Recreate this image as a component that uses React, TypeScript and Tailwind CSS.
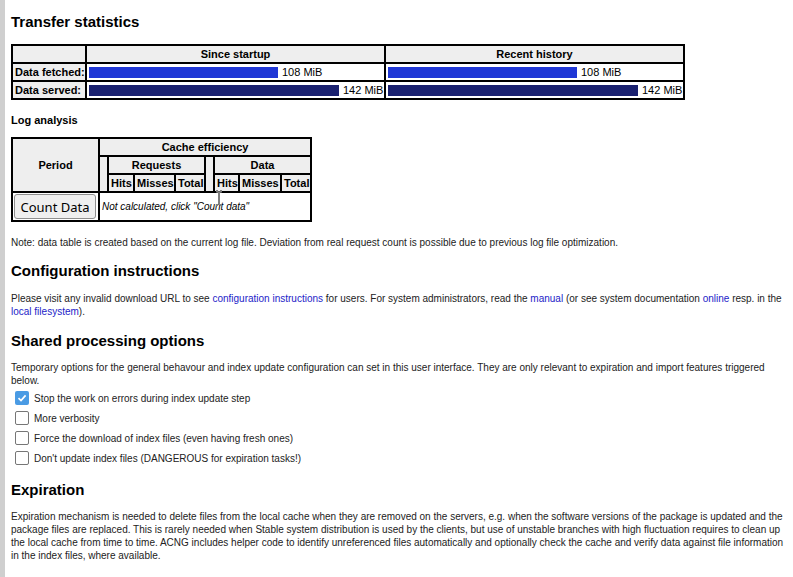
import React from 'react';

const cell = 'border border-black p-0';
const head = 'border border-black bg-[#eeeeee] px-[2px] py-0 font-bold text-center whitespace-nowrap';

const Bar: React.FC<{ width: number; color: string; label: string }> = ({ width, color, label }) => (
  <div className="flex items-center gap-[4px] pl-[2px]">
    <div className={`h-[11px] ${color}`} style={{ width }} />
    <span>{label}</span>
  </div>
);

const Check: React.FC<{ checked?: boolean; label: string }> = ({ checked, label }) => (
  <label className="flex items-center gap-[5px] h-[20px] pl-[4px]">
    {checked ? (
      <span className="w-[14px] h-[14px] rounded-[2px] bg-[#4a9be4] flex items-center justify-center">
        <svg width="10" height="10" viewBox="0 0 10 10">
          <path d="M1.5 5.2 L4 7.6 L8.6 2.4" fill="none" stroke="white" strokeWidth="1.7" />
        </svg>
      </span>
    ) : (
      <span className="w-[14px] h-[14px] rounded-[2px] border border-[#767676] bg-white" />
    )}
    <span>{label}</span>
  </label>
);

const A: React.FC<{ children: React.ReactNode }> = ({ children }) => (
  <a href="#" className="text-[#2323c8]">{children}</a>
);

export default function App() {
  return (
    <div className="min-h-[577px] border-l-[5px] border-[#cfcfcf] bg-white pl-[6px] pr-[7px] text-[10px] leading-[13px] text-[#222] font-['Liberation_Sans',Arial,sans-serif]">
      <h2 className="pt-[13px] text-[15px] leading-[18px] font-bold text-black">Transfer statistics</h2>

      <table className="mt-[13px] border-separate border-spacing-0 border border-black text-[11px] leading-[16px] text-black table-fixed w-[672px]">
        <colgroup>
          <col className="w-[74px]" />
          <col className="w-[299px]" />
          <col className="w-[299px]" />
        </colgroup>
        <tbody>
          <tr>
            <td className={`${head}`}></td>
            <td className={head}>Since startup</td>
            <td className={head}>Recent history</td>
          </tr>
          <tr>
            <td className={`${head} text-left px-[1px]`}>Data fetched:</td>
            <td className={cell}><Bar width={189} color="bg-[#2038d6]" label="108 MiB" /></td>
            <td className={cell}><Bar width={189} color="bg-[#2038d6]" label="108 MiB" /></td>
          </tr>
          <tr>
            <td className={`${head} text-left px-[1px]`}>Data served:</td>
            <td className={cell}><Bar width={250} color="bg-[#1a2170]" label="142 MiB" /></td>
            <td className={cell}><Bar width={250} color="bg-[#1a2170]" label="142 MiB" /></td>
          </tr>
        </tbody>
      </table>

      <h3 className="mt-[13px] text-[11px] leading-[14px] font-bold text-black">Log analysis</h3>

      <div className="relative w-fit">
        <table className="mt-[10px] border-separate border-spacing-0 border border-black text-[11px] leading-[16px] text-black table-fixed w-[299px]">
          <colgroup>
            <col className="w-[87px]" />
            <col className="w-[9px]" />
            <col className="w-[26px]" />
            <col className="w-[41px]" />
            <col className="w-[30px]" />
            <col className="w-[9px]" />
            <col className="w-[25px]" />
            <col className="w-[42px]" />
            <col className="w-[30px]" />
          </colgroup>
          <tbody>
            <tr>
              <td rowSpan={3} className={head}>Period</td>
              <td colSpan={8} className={head}>Cache efficiency</td>
            </tr>
            <tr>
              <td rowSpan={2} className={head}></td>
              <td colSpan={3} className={head}>Requests</td>
              <td rowSpan={2} className={head}></td>
              <td colSpan={3} className={head}>Data</td>
            </tr>
            <tr>
              <td className={`${head} px-0`}>Hits</td>
              <td className={`${head} px-0`}>Misses</td>
              <td className={`${head} px-0`}>Total</td>
              <td className={`${head} px-0`}>Hits</td>
              <td className={`${head} px-0`}>Misses</td>
              <td className={`${head} px-0`}>Total</td>
            </tr>
            <tr>
              <td className={`${cell} px-[1px] py-[1px]`}>
                <button className="h-[25px] w-[82px] rounded-[3px] border border-[#8f8f8f] bg-[#efefef] text-[13px] text-black font-['Noto_Sans',sans-serif]">
                  Count Data
                </button>
              </td>
              <td colSpan={8} className={`${cell} px-[2px] italic text-[10px]`}>Not calculated, click "Count data"</td>
            </tr>
          </tbody>
        </table>
        <svg className="absolute left-[204px] top-[53px]" width="8" height="16" viewBox="0 0 8 16">
          <path d="M1 1 H3 M5 1 H7 M4 1.5 V14.5 M1 15 H3 M5 15 H7" stroke="#fff" strokeWidth="2.4" fill="none" />
          <path d="M1 1 H3 M5 1 H7 M4 1.5 V14.5 M1 15 H3 M5 15 H7" stroke="#000" strokeWidth="1" fill="none" />
        </svg>
      </div>

      <p className="mt-[14px]">
        Note: data table is created based on the current log file. Deviation from real request count is possible due to previous log file optimization.
      </p>

      <h2 className="mt-[13px] text-[15px] leading-[18px] font-bold text-black">Configuration instructions</h2>
      <p className="mt-[12px]">
        Please visit any invalid download URL to see <A>configuration instructions</A> for users. For system administrators, read the{' '}
        <A>manual</A> (or see system documentation <A>online</A> resp. in the <A>local filesystem</A>).
      </p>

      <h2 className="mt-[14px] text-[15px] leading-[18px] font-bold text-black">Shared processing options</h2>
      <p className="mt-[11px]">
        Temporary options for the general behavour and index update configuration can set in this user interface. They are only relevant to expiration and import features triggered below.
      </p>
      <div className="mt-[1px]">
        <Check checked label="Stop the work on errors during index update step" />
        <Check label="More verbosity" />
        <Check label="Force the download of index files (even having fresh ones)" />
        <Check label="Don't update index files (DANGEROUS for expiration tasks!)" />
      </div>

      <h2 className="mt-[13px] text-[15px] leading-[18px] font-bold text-black">Expiration</h2>
      <p className="mt-[11px]">
        Expiration mechanism is needed to delete files from the local cache when they are removed on the servers, e.g. when the software versions of the package is updated and the package files are replaced. This is rarely needed when Stable system distribution is used by the clients, but use of unstable branches with high fluctuation requires to clean up the local cache from time to time. ACNG includes helper code to identify unreferenced files automatically and optionally check the cache and verify data against file information in the index files, where available.
      </p>
    </div>
  );
}
